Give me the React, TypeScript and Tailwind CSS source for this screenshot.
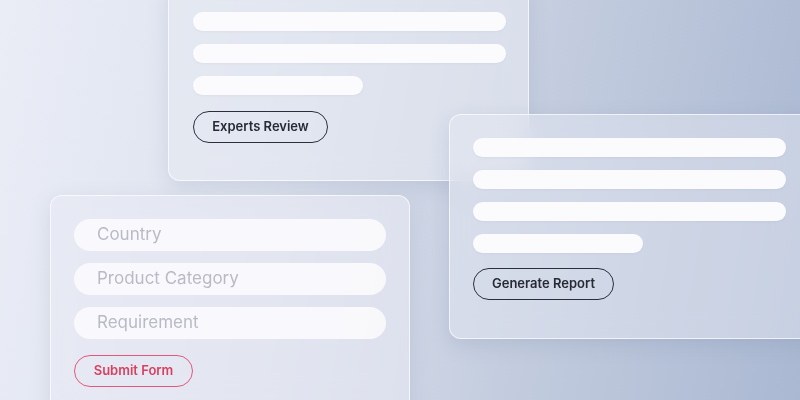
import React from "react";

const font = { fontFamily: "Inter, 'Noto Sans', sans-serif" };

function Bar({ w }: { w: string }) {
  return <div className={`h-[19px] ${w} rounded-full bg-[#fbfbfd] shadow-[0_1px_2px_rgba(120,130,160,0.08)]`} />;
}

function PillButton({ label, tone, w }: { label: string; tone: "dark" | "pink"; w: string }) {
  const cls =
    tone === "dark"
      ? "border-[#2b2f3d] text-[#262a36]"
      : "border-[#e4567a] text-[#d9405f]";
  return (
    <div
      className={`flex h-[32px] ${w} items-center justify-center rounded-full border-[1.5px] ${cls} text-[13px] font-semibold`}
    >
      {label}
    </div>
  );
}

function Field({ label }: { label: string }) {
  return (
    <div className="flex h-[32px] items-center rounded-full bg-[#fbfafd]/90 pl-[23px] text-[17px] text-[#b8bbc6]">
      {label}
    </div>
  );
}

export default function App() {
  return (
    <div
      className="relative h-[400px] w-[800px] overflow-hidden bg-[linear-gradient(100deg,#eaedf6_0%,#dde2ee_35%,#c4cddf_65%,#aab8d2_100%)]"
      style={font}
    >
      {/* review card */}
      <div className="absolute left-[168px] top-[-20px] h-[201px] w-[361px] rounded-[12px] border border-white/70 bg-[#e6e9f2]/60 shadow-[0_6px_20px_rgba(110,125,160,0.18)] backdrop-blur-md">
        <div className="flex flex-col gap-[13px] pl-[24px] pt-[31px]">
          <Bar w="w-[313px]" />
          <Bar w="w-[313px]" />
          <Bar w="w-[170px]" />
        </div>
        <div className="pl-[24px] pt-[16px]">
          <PillButton label="Experts Review" tone="dark" w="w-[135px]" />
        </div>
      </div>

      {/* report card */}
      <div className="absolute left-[449px] top-[114px] h-[225px] w-[380px] rounded-[12px] border border-white/70 bg-[#e4e8f1]/50 shadow-[0_6px_20px_rgba(110,125,160,0.2)] backdrop-blur-md">
        <div className="flex flex-col gap-[13px] pl-[23px] pt-[23px]">
          <Bar w="w-[313px]" />
          <Bar w="w-[313px]" />
          <Bar w="w-[313px]" />
          <Bar w="w-[170px]" />
        </div>
        <div className="pl-[23px] pt-[15px]">
          <PillButton label="Generate Report" tone="dark" w="w-[141px]" />
        </div>
      </div>

      {/* form card */}
      <div className="absolute left-[50px] top-[195px] h-[230px] w-[360px] rounded-[12px] border border-white/70 bg-[#e7eaf3]/60 shadow-[0_6px_20px_rgba(110,125,160,0.18)] backdrop-blur-md">
        <div className="flex flex-col gap-[12px] px-[23px] pt-[23px]">
          <Field label="Country" />
          <Field label="Product Category" />
          <Field label="Requirement" />
        </div>
        <div className="pl-[23px] pt-[16px]">
          <PillButton label="Submit Form" tone="pink" w="w-[119px]" />
        </div>
      </div>
    </div>
  );
}
